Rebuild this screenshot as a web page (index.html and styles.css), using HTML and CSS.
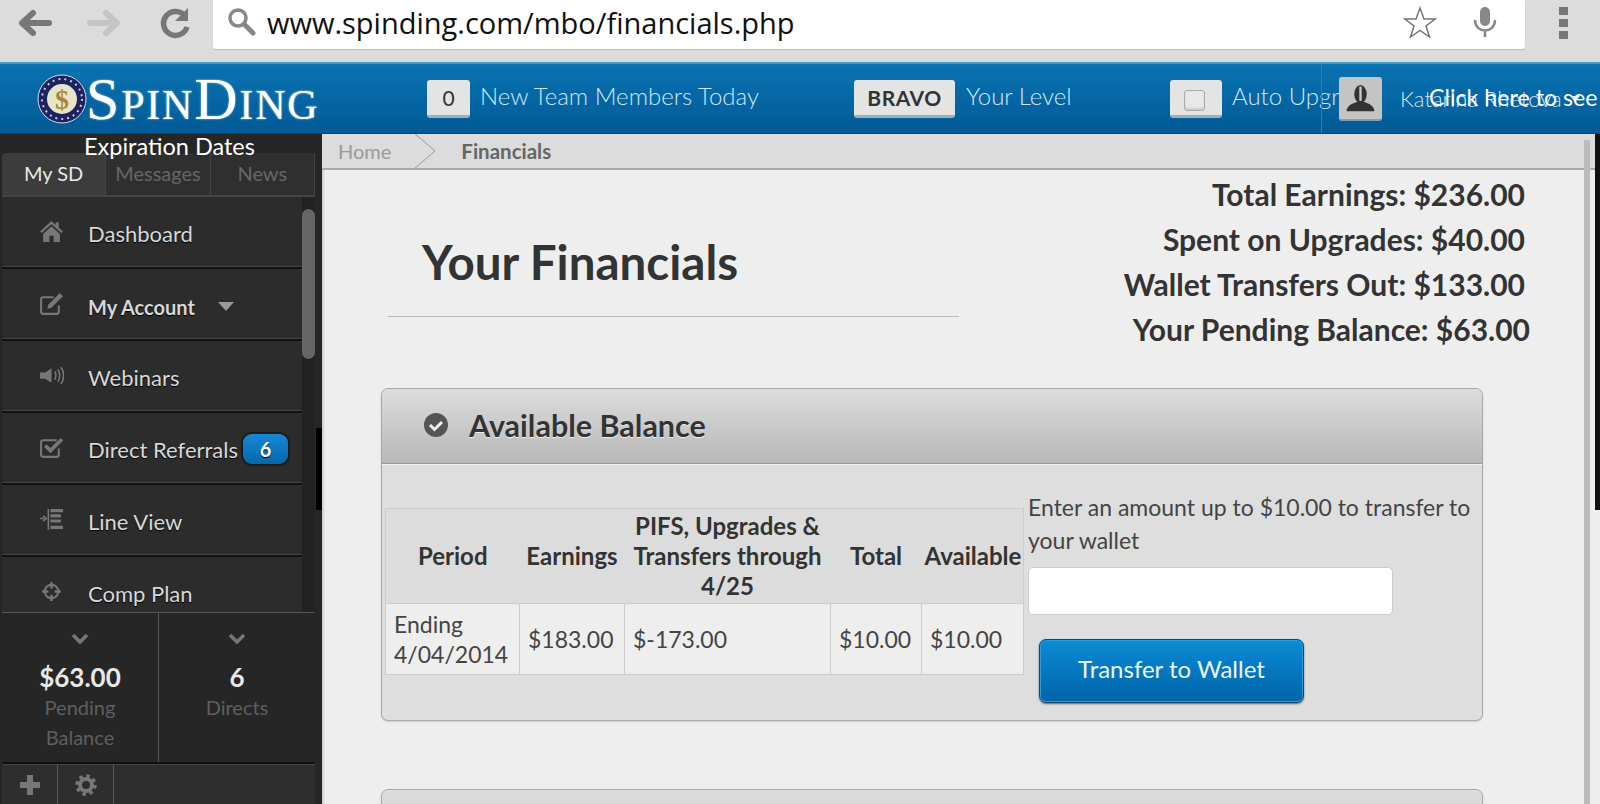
FILE: index.html
```html
<!DOCTYPE html>
<html lang="en">
<head>
<meta charset="utf-8">
<title>Financials</title>
<link rel="stylesheet" href="styles.css">
</head>
<body>
<div class="toolbar">
  <div class="nav">
    <svg class="nav-icon" viewBox="0 0 36 32"><path d="M33 16H8M17 6 6 16l11 10" fill="none" stroke="#777" stroke-width="6" stroke-linecap="round" stroke-linejoin="round"/></svg>
    <svg class="nav-icon" viewBox="0 0 36 32"><path d="M3 16h25M19 6l11 10-11 10" fill="none" stroke="#c4c4c4" stroke-width="6" stroke-linecap="round" stroke-linejoin="round"/></svg>
    <svg class="nav-icon" viewBox="0 0 36 32"><path d="M27 9a12 12 0 1 0 2 11" fill="none" stroke="#777" stroke-width="5.5"/><path d="M30 1v13H17z" fill="#777"/></svg>
  </div>
  <div class="urlbar">
    <svg class="search" viewBox="0 0 30 30"><circle cx="12" cy="11" r="8" fill="none" stroke="#888" stroke-width="3.5"/><path d="m18 17 9 9" stroke="#888" stroke-width="5" stroke-linecap="round"/></svg>
    <span class="url">www.spinding.com/mbo/financials.php</span>
    <svg class="star" viewBox="0 0 34 32"><path d="m17 2 4 11h11l-9 7 3.500 11L17 24.500 7.500 31 11 20l-9-7h11z" fill="none" stroke="#777" stroke-width="1.500"/></svg>
    <svg class="mic" viewBox="0 0 26 32"><rect x="8" y="1" width="10" height="19" rx="5" fill="#888"/><path d="M3 14c0 14 20 14 20 0M13 24v7" fill="none" stroke="#888" stroke-width="2.500"/></svg>
  </div>
  <div class="menu-dots"><i></i><i></i><i></i></div>
</div>

<header class="topbar">
  <div class="logo">
    <svg class="seal" viewBox="0 0 50 50">
      <circle cx="25" cy="25" r="24" fill="#1d2360" stroke="#d8dbe8"/>
      <circle cx="25" cy="25" r="20" fill="none" stroke="#c8cce0" stroke-width="2" stroke-dasharray="2 4"/>
      <circle cx="25" cy="25" r="15" fill="#e8e4c8"/>
      <text x="25" y="35" text-anchor="middle" class="seal-text">$</text>
    </svg>
    <span class="logo-text">SpinDing</span>
  </div>
  <div class="stat stat-team"><span class="chip chip-num">0</span><span class="stat-label">New Team Members Today</span></div>
  <div class="stat stat-level"><span class="chip chip-level">BRAVO</span><span class="stat-label">Your Level</span></div>
  <div class="stat stat-auto"><span class="chip chip-check"><i></i></span><span class="stat-label">Auto Upgrade</span></div>
  <div class="user">
    <span class="avatar"><svg viewBox="0 0 43 44"><path d="M7 36c0-6 6-8 11-10h7c5 2 11 4 11 10z" fill="#333"/><ellipse cx="21.500" cy="18" rx="6.500" ry="9.500" fill="#333"/><path d="M21.500 10v15" stroke="#c9c9c9" stroke-width="2.500"/></svg></span>
    <span class="user-name">Katarina Rhetova</span><i class="user-caret"></i>
    <span class="user-click">Click here to see</span>
  </div>
</header>

<div class="workspace">
  <aside class="sidebar">
    <div class="expiry">Expiration Dates</div>
    <div class="tabs">
      <span class="tab tab-on">My SD</span>
      <span class="tab">Messages</span>
      <span class="tab">News</span>
    </div>
    <div class="menu-wrap">
      <nav class="menu">
        <a class="item"><svg class="ico" viewBox="0 0 24 24"><path d="M12 2 1 12l1.500 1.500L12 5l9.500 8.500L23 12l-4-3.600V3h-3v2.800zM4 14.500V22h6v-6h4v6h6v-7.500L12 7z" fill="#777"/></svg><span>Dashboard</span></a>
        <a class="item item-strong"><svg class="ico" viewBox="0 0 24 24"><path d="M19 13v6a2 2 0 0 1-2 2H4a2 2 0 0 1-2-2V7a2 2 0 0 1 2-2h10" fill="none" stroke="#777" stroke-width="2"/><path d="M8 16l1-4L20 1l3 3-11 11z" fill="#777"/></svg><span>My Account</span><i class="caret"></i></a>
        <a class="item"><svg class="ico" viewBox="0 0 24 24"><path d="M1 9h5l6-4v14l-6-4H1z" fill="#777"/><path d="M15 8c1.500 2 1.500 6 0 8M18 6c2.500 3 2.500 9 0 12M21 4c3.500 4 3.500 12 0 16" fill="none" stroke="#777" stroke-width="1.500"/></svg><span>Webinars</span></a>
        <a class="item"><svg class="ico" viewBox="0 0 24 24"><path d="M19 13v6a2 2 0 0 1-2 2H4a2 2 0 0 1-2-2V7a2 2 0 0 1 2-2h13" fill="none" stroke="#777" stroke-width="2"/><path d="m6 10 5 5L22 4" fill="none" stroke="#777" stroke-width="3.500"/></svg><span>Direct Referrals</span><b class="badge">6</b></a>
        <a class="item"><svg class="ico" viewBox="0 0 24 24"><path d="M1 11h4M4 8.500 7 11l-3 2.500M9 2v20" fill="none" stroke="#777" stroke-width="1.500"/><path d="M11 2h12v3H11zM11 7h10v3H11zM11 12h10v3H11zM11 18h12v3H11z" fill="#777"/></svg><span>Line View</span></a>
        <a class="item"><svg class="ico" viewBox="0 0 24 24"><circle cx="12" cy="12" r="6.500" fill="none" stroke="#777" stroke-width="2"/><path d="M12 3v6M12 15v6M3 12h6M15 12h6" stroke="#777" stroke-width="2.500"/></svg><span>Comp Plan</span></a>
      </nav>
      <div class="scroll-track"><div class="scroll-thumb"></div></div>
    </div>
    <div class="stats">
      <div class="stat-cell">
        <svg class="chev" viewBox="0 0 18 12"><path d="m2 2 7 7 7-7" fill="none" stroke="#777" stroke-width="3.500"/></svg>
        <strong>$63.00</strong>
        <span>Pending<br>Balance</span>
      </div>
      <div class="stat-cell">
        <svg class="chev" viewBox="0 0 18 12"><path d="m2 2 7 7 7-7" fill="none" stroke="#777" stroke-width="3.500"/></svg>
        <strong>6</strong>
        <span>Directs</span>
      </div>
    </div>
    <div class="tools">
      <span class="tool"><svg viewBox="0 0 22 22"><path d="M11 1v20M1 11h20" stroke="#777" stroke-width="6"/></svg></span>
      <span class="tool"><svg viewBox="0 0 22 22"><circle cx="11" cy="11" r="6" fill="none" stroke="#777" stroke-width="4"/><circle cx="11" cy="11" r="9" fill="none" stroke="#777" stroke-width="3.500" stroke-dasharray="3.500 3.570"/></svg></span>
    </div>
  </aside>

  <main class="content">
    <div class="crumbs">
      <span class="crumb-home">Home</span>
      <svg class="crumb-sep" viewBox="0 0 24 36"><path d="M1 0l21 18L1 36" fill="none" stroke="#999" stroke-width="1"/></svg>
      <span class="crumb-now">Financials</span>
    </div>
    <div class="page">
      <section class="summary">
        <h1 class="title">Your Financials</h1>
        <div class="totals">
          <div class="t1">Total Earnings: $236.00</div>
          <div class="t1">Spent on Upgrades: $40.00</div>
          <div class="t1">Wallet Transfers Out: $133.00</div>
          <div class="t2">Your Pending Balance: $63.00</div>
        </div>
      </section>
      <section class="panel">
        <div class="panel-head">
          <svg class="check" viewBox="0 0 24 24"><circle cx="12" cy="12" r="12" fill="#555"/><path d="m6 12 4.500 4.500L18 9" fill="none" stroke="#eee" stroke-width="3"/></svg>
          <h2>Available Balance</h2>
        </div>
        <div class="panel-body">
          <table class="grid">
            <thead>
              <tr><th class="c1">Period</th><th class="c2">Earnings</th><th class="c3">PIFS, Upgrades &amp; Transfers through 4/25</th><th class="c4">Total</th><th class="c5">Available</th></tr>
            </thead>
            <tbody>
              <tr><td>Ending 4/04/2014</td><td>$183.00</td><td>$-173.00</td><td>$10.00</td><td>$10.00</td></tr>
            </tbody>
          </table>
          <form class="transfer">
            <label for="amt">Enter an amount up to $10.00 to transfer to your wallet</label>
            <input id="amt" type="text">
            <button type="button">Transfer to Wallet</button>
          </form>
        </div>
      </section>
      <section class="panel panel-next"></section>
    </div>
    <div class="page-scroll"></div>
    <div class="page-edge"></div>
  </main>
</div>
</body>
</html>
```
FILE: styles.css
```css
* { box-sizing: border-box; }
html, body { margin: 0; height: 804px; overflow: hidden; }
body { font-family: Lato, "Liberation Sans", sans-serif; background: #eee; color: #333; display: flex; flex-direction: column; }

.toolbar { height: 62px; flex: none; display: flex; background: #dcdcdc; }
.nav { width: 213px; display: flex; padding: 7px 0 0 16px; gap: 35px; }
.nav-icon { width: 36px; height: 32px; }
.urlbar { width: 1312px; height: 49px; background: #fff; border-radius: 0 0 3px 3px; box-shadow: 0 1px 1px #bbb; display: flex; align-items: center; padding-left: 13px; }
.search { width: 30px; height: 30px; margin-bottom: 6px; }
.url { font-family: "Open Sans", sans-serif; font-size: 29px; color: #111; margin-left: 11px; flex: 1; line-height: 45px; padding-bottom: 4px; height: 49px; }
.star { width: 34px; height: 32px; margin-right: 35px; margin-bottom: 6px; }
.mic { width: 26px; height: 32px; margin-right: 27px; margin-bottom: 6px; }
.menu-dots { display: flex; flex-direction: column; gap: 4px; padding: 7px 0 0 34px; }
.menu-dots i { width: 9px; height: 8px; background: #777; }

.topbar { position: relative; height: 72px; flex: none; display: flex; align-items: center; background: linear-gradient(#0a73b2, #005a96); border-top: 2px solid #4a9ac8; border-bottom: 1px solid #014a7e; overflow: hidden; }
.logo { width: 427px; padding-left: 37px; display: flex; align-items: center; flex: none; }
.seal { width: 50px; height: 50px; flex: none; }
.seal-text { font: bold 28px "Liberation Serif", serif; fill: #a8892e; }
.logo-text { font: 60px/60px "Liberation Serif", serif; font-variant: small-caps; color: #fff; letter-spacing: 1.800px; text-shadow: 0 0 2px #bfe0f2; margin-left: -1px; white-space: nowrap; }
.stat { display: flex; align-items: center; flex: none; }
.stat-label { font-size: 24px; font-weight: 300; color: #cfe6f5; white-space: nowrap; padding-bottom: 6px; }
.chip { height: 38px; background: #e4e4e4; border-radius: 3px; border-bottom: 3px solid #9fb0bc; color: #333; display: flex; align-items: center; justify-content: center; font-size: 21px; }
.chip-num { width: 43px; }
.stat-team { width: 427px; gap: 10px; }
.chip-level { width: 101px; font-weight: 700; letter-spacing: .5px; }
.stat-level { width: 316px; gap: 11px; }
.chip-check { width: 52px; }
.chip-check i { width: 21px; height: 21px; border: 1px solid #aaa; border-radius: 3px; background: #e8e8e8; box-shadow: inset 0 -2px 2px #ccc; margin: 7px 4px 0 0; }
.stat-auto { gap: 10px; }
.user { position: absolute; left: 1321px; top: 0; bottom: 0; width: 279px; border-left: 1px solid #2a7fb5; display: flex; align-items: center; }
.avatar { width: 43px; height: 44px; margin-left: 17px; background: #c4c4c4; border-radius: 3px; border-bottom: 2px solid #7fa0b8; display: block; flex: none; }
.avatar svg { display: block; width: 100%; height: 100%; }
.user-name { font-size: 22px; font-weight: 300; color: #cfe6f5; margin-left: 18px; white-space: nowrap; }
.user-caret { margin-left: 8px; border: 5px solid transparent; border-top: 6px solid #cfe6f5; border-bottom: 0; }
.user-click { position: absolute; left: 107px; top: 19px; font-size: 23.200px; color: #fff; white-space: nowrap; }

.workspace { flex: 1; min-height: 0; display: flex; }
.sidebar { position: relative; width: 322px; flex: none; background: #262626; display: flex; flex-direction: column; height: 670px; overflow: hidden; }
.sidebar::after { content: ""; position: absolute; right: 0; top: 294px; width: 6px; height: 82px; background: #000; }
.expiry { position: absolute; left: 84px; top: 0; font-size: 23.500px; color: #fff; line-height: 24px; z-index: 2; }
.tabs { margin: 19px 7px 0 2px; height: 44px; display: flex; flex: none; background: #2f2f2f; border-radius: 4px 4px 0 0; border-bottom: 2px solid #444; }
.tab { flex: 1; display: flex; align-items: center; justify-content: center; font-size: 20px; color: #666; border-right: 1px solid #444; padding-bottom: 2px; }
.tab-on { background: #3c3c3c; color: #e8e8e8; border-radius: 4px 0 0 0; }
.menu-wrap { flex: none; height: 415px; display: flex; margin: 0 7px 0 2px; overflow: hidden; background: #222; }
.menu { width: 300px; background: #2c2c2c; flex: none; }
.item { height: 72px; display: flex; align-items: center; padding: 2px 0 0 37px; font-size: 22px; color: #d8d8d8; border-bottom: 2px solid #111; box-shadow: inset 0 -1px 0 #444; text-shadow: 0 1px 1px #000; }
.item-strong { font-weight: 700; font-size: 20px; padding-top: 5px; }
.item .ico { margin-top: -4px; }
.ico { width: 25px; height: 25px; margin-right: 24px; flex: none; }
.caret { width: 0; height: 0; margin-left: 23px; border: 8px solid transparent; border-top: 9px solid #999; border-bottom: 0; }
.badge { margin-left: 5px; width: 45px; height: 30px; border-radius: 9px; background: linear-gradient(#1688d4, #0568ac); box-shadow: 0 0 0 2px #1c1c1c; color: #fff; font-weight: 700; font-size: 20px; display: flex; align-items: center; justify-content: center; }
.scroll-track { flex: 1; padding: 12px 0 0; }
.scroll-thumb { width: 13px; height: 150px; background: #666; border-radius: 7px; }
.stats { flex: none; height: 152px; margin: 0 7px 0 2px; display: flex; border-top: 1px solid #555; border-bottom: 2px solid #111; background: #262626; }
.stat-cell { flex: 1; display: flex; flex-direction: column; align-items: center; text-align: center; padding-top: 20px; border-right: 1px solid #555; }
.stat-cell:last-child { border-right: 0; }
.chev { width: 18px; height: 12px; flex: none; }
.stat-cell strong { font-size: 26px; font-weight: 700; color: #e8e8e8; line-height: 32px; margin-top: 16px; }
.stat-cell span { font-size: 20px; color: #5f5f5f; line-height: 30px; margin-top: -1px; }
.tools { flex: 1; margin: 0 7px 0 2px; display: flex; background: #2e2e2e; border-top: 1px solid #444; }
.tool { width: 56px; display: flex; align-items: center; justify-content: center; border-right: 1px solid #555; }
.tool svg { width: 22px; height: 22px; }

.content { position: relative; flex: 1; min-width: 0; background: #eee; overflow: hidden; box-shadow: inset 3px 0 3px -2px #bbb; }
.crumbs { height: 36px; background: #dcdcdc; border-bottom: 2px solid #aaa; display: flex; align-items: center; padding-left: 16px; font-size: 20px; }
.crumb-home { color: #999; }
.crumb-sep { width: 24px; height: 36px; margin-left: 22px; margin-right: 24px; flex: none; }
.crumb-now { color: #666; font-weight: 700; font-size: 20.500px; }
.page { padding-left: 59px; }
.summary { display: flex; height: 218px; }
.title { width: 571px; margin: 0 0 0 7px; height: 147px; padding: 64px 0 0 34px; border-bottom: 1px solid #bbb; font-size: 47.500px; font-weight: 700; line-height: 56px; color: #333; flex: none; white-space: nowrap; }
.totals { width: 576px; padding-top: 2px; margin-left: -5px; flex: none; }
.t1, .t2 { font-size: 30px; font-weight: 700; line-height: 45px; text-align: right; white-space: nowrap; padding-right: 5px; }
.t2 { padding-right: 0; }
.panel { width: 1102px; border: 1px solid #aaa; border-radius: 7px; overflow: hidden; background: #dedede; box-shadow: 0 1px 2px #ccc; }
.panel-head { height: 75px; background: linear-gradient(#dcdcdc, #b8b8b8); border-bottom: 1px solid #999; display: flex; align-items: center; padding: 0 0 3px 42px; box-shadow: 0 1px 0 #f4f4f4; }
.check { width: 24px; height: 24px; margin-right: 21px; flex: none; }
.panel-head h2 { margin: 0; font-size: 30.500px; font-weight: 700; color: #333; text-shadow: 0 1px 0 #eee; }
.panel-body { height: 256px; display: flex; align-items: flex-start; padding: 44px 0 0 3px; }
.grid { width: 638px; border-collapse: collapse; table-layout: fixed; font-size: 24px; flex: none; }
.grid th { height: 95px; font-weight: 700; line-height: 30px; border: 1px solid #ccc; border-width: 1px 0; background: #dcdcdc; padding: 0 3px; }
.grid th:first-child { border-left-width: 1px; }
.grid th:last-child { border-right-width: 1px; }
.grid td { height: 71px; line-height: 30px; border: 1px solid #ccc; background: #eee; padding: 0 8px; font-weight: 400; font-size: 23px; color: #444; }
.c1 { width: 134px; } .c2 { width: 105px; } .c3 { width: 206px; } .c4 { width: 91px; } .c5 { width: 102px; }
.transfer { width: 460px; margin-left: 4px; margin-top: -17px; }
.transfer label { display: block; font-size: 23px; font-weight: 400; line-height: 33px; color: #444; }
.transfer input { display: block; width: 365px; height: 48px; margin-top: 10px; border: 1px solid #ccc; border-radius: 5px; background: #fff; }
.transfer button { display: block; width: 265px; height: 64px; margin: 24px 0 0 11px; padding: 0 0 6px; border: 1px solid #034a7a; border-radius: 7px; background: linear-gradient(#0b8bd6, #0064a8); box-shadow: inset 0 0 0 1px #28a0e0, 0 1px 2px #666; color: #eaf5fc; font: 400 24px Lato, sans-serif; }
.panel-next { height: 60px; margin-top: 68px; background: linear-gradient(#dcdcdc, #d0d0d0); }
.page-scroll { position: absolute; right: 10px; top: 6px; bottom: 0; width: 6px; background: #bbb; }
.page-edge { position: absolute; right: 0; top: 0; width: 5px; height: 376px; background: #111; }
```
